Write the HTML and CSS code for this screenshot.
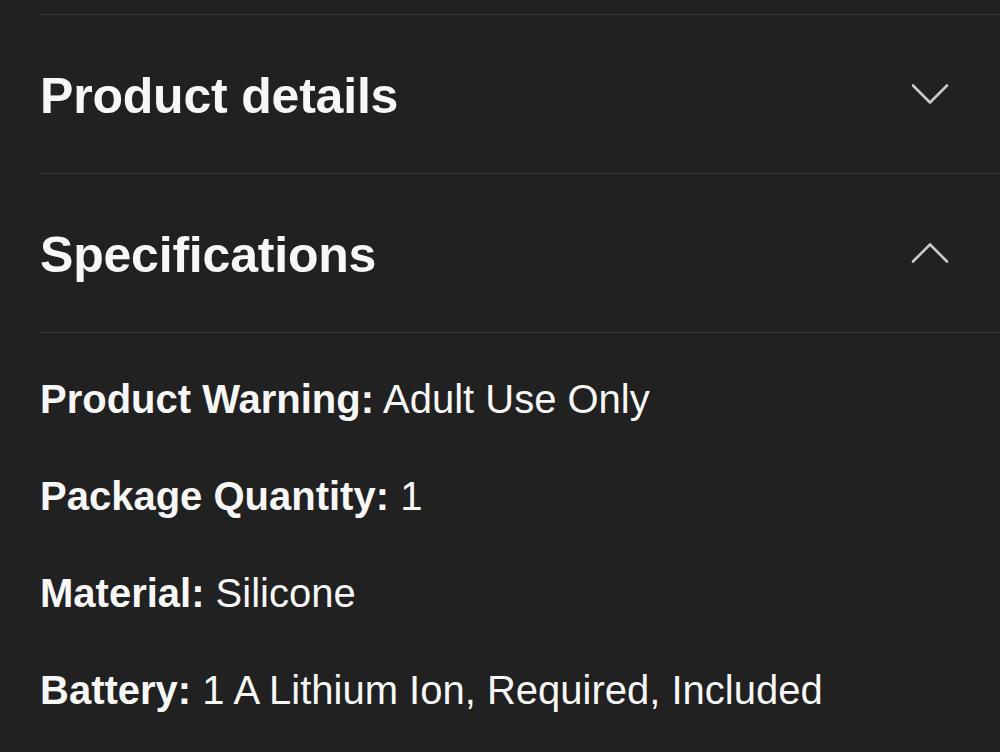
FILE: index.html
```html
<!DOCTYPE html>
<html lang="en">
<head>
<meta charset="utf-8">
<title>Product</title>
<link rel="stylesheet" href="styles.css">
</head>
<body>
<div class="page">
  <div class="accordion">
    <div class="acc-header">
      <h2 class="acc-title">Product details</h2>
      <svg class="chevron" width="38" height="22" viewBox="0 0 38 22"><polyline points="2,2.5 19,19.5 36,2.5" /></svg>
    </div>
    <div class="acc-header">
      <h2 class="acc-title">Specifications</h2>
      <svg class="chevron" width="38" height="22" viewBox="0 0 38 22"><polyline points="2,19.5 19,2.5 36,19.5" /></svg>
    </div>
    <ul class="specs">
      <li><b>Product Warning:</b> Adult Use Only</li>
      <li><b>Package Quantity:</b> 1</li>
      <li><b>Material:</b> Silicone</li>
      <li><b>Battery:</b> 1 A Lithium Ion, Required, Included</li>
    </ul>
  </div>
</div>
</body>
</html>
```
FILE: styles.css
```css
html, body {
  margin: 0;
  padding: 0;
  background: #212121;
}
body {
  font-family: "Liberation Sans", Arial, Helvetica, sans-serif;
  color: #f7f7f7;
}
.page {
  padding-top: 14px;
  padding-left: 40px;
  height: 738px;
  overflow: hidden;
}
.accordion {
  border-top: 1px solid #3a3a3a;
}
.acc-header {
  display: flex;
  align-items: center;
  justify-content: space-between;
  height: 158px;
  border-bottom: 1px solid #3a3a3a;
  padding-right: 51px;
}
.acc-title {
  margin: 0;
  padding-top: 3px;
  font-size: 50px;
  font-weight: 700;
  line-height: 1;
  letter-spacing: -0.2px;
}
.chevron {
  fill: none;
  stroke: #c9c9c9;
  stroke-width: 2.6;
  stroke-linecap: round;
  stroke-linejoin: round;
}
.specs {
  list-style: none;
  margin: 0;
  padding: 18px 0 0 0;
  font-size: 40px;
  line-height: 97px;
}
.specs li {
  white-space: nowrap;
}
.specs b {
  font-weight: 700;
}
```
